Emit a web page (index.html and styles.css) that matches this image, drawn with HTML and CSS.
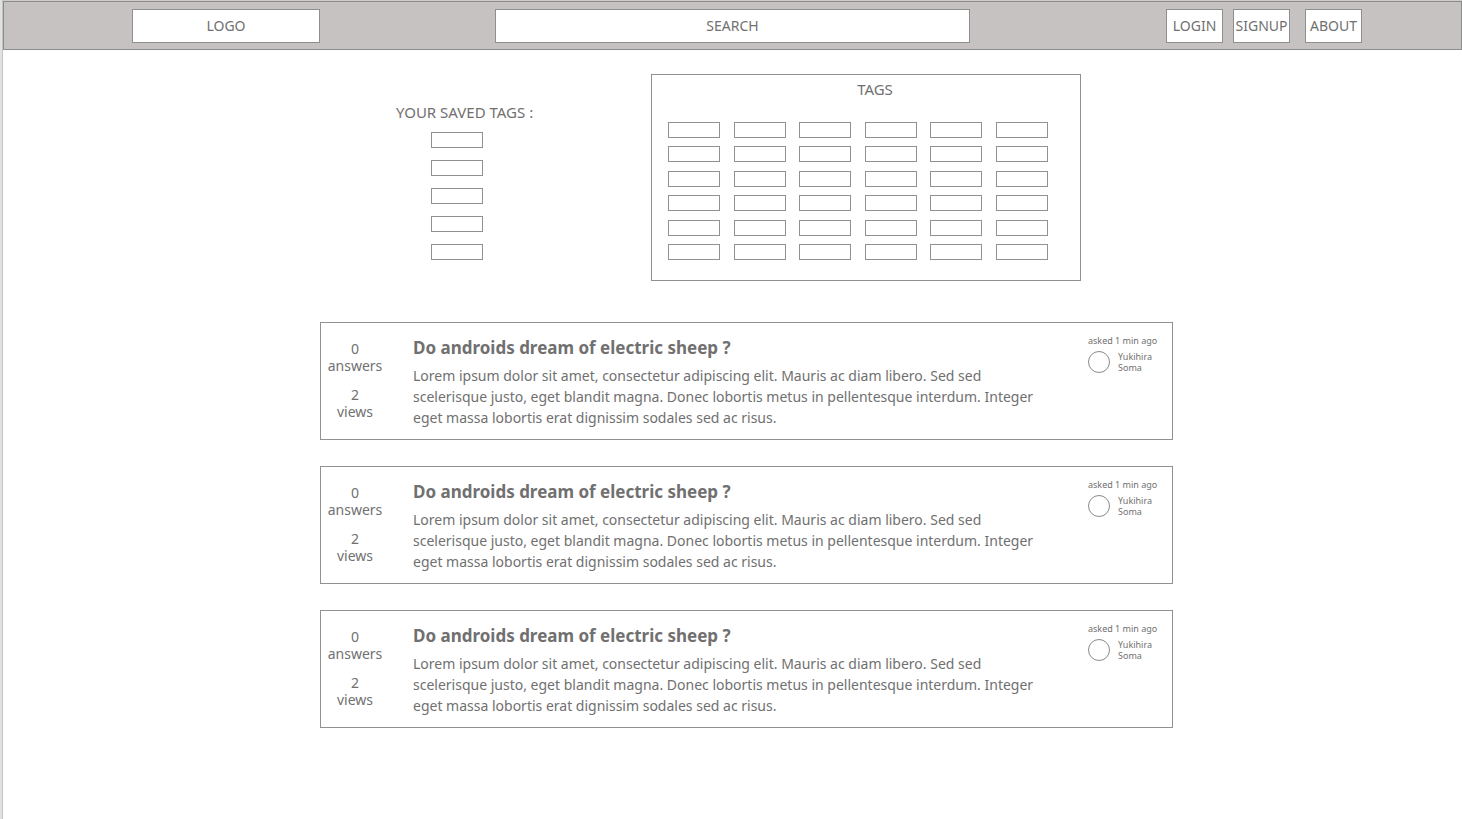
FILE: index.html
```html
<!DOCTYPE html>
<html lang="en">
<head>
<meta charset="utf-8">
<meta name="viewport" content="width=device-width, initial-scale=1">
<title>Questions</title>
<link rel="stylesheet" href="styles.css">
</head>
<body>
<div class="page">
  <header class="topbar">
    <a class="box logo" href="#">LOGO</a>
    <input class="box search" type="text" placeholder="SEARCH" aria-label="Search">
    <nav class="nav">
      <button class="box nav-button" type="button">LOGIN</button>
      <button class="box nav-button" type="button">SIGNUP</button>
      <button class="box nav-button nav-button-last" type="button">ABOUT</button>
    </nav>
  </header>
  <main class="main">
    <div class="tag-area">
      <section class="saved">
        <h2 class="heading">YOUR SAVED TAGS :</h2>
        <ul class="saved-list">
          <li class="tag"></li><li class="tag"></li><li class="tag"></li><li class="tag"></li><li class="tag"></li>
        </ul>
      </section>
      <section class="tags-panel">
        <h2 class="heading tags-title">TAGS</h2>
        <ul class="tag-grid">
          <li class="tag"></li><li class="tag"></li><li class="tag"></li><li class="tag"></li><li class="tag"></li><li class="tag"></li>
          <li class="tag"></li><li class="tag"></li><li class="tag"></li><li class="tag"></li><li class="tag"></li><li class="tag"></li>
          <li class="tag"></li><li class="tag"></li><li class="tag"></li><li class="tag"></li><li class="tag"></li><li class="tag"></li>
          <li class="tag"></li><li class="tag"></li><li class="tag"></li><li class="tag"></li><li class="tag"></li><li class="tag"></li>
          <li class="tag"></li><li class="tag"></li><li class="tag"></li><li class="tag"></li><li class="tag"></li><li class="tag"></li>
          <li class="tag"></li><li class="tag"></li><li class="tag"></li><li class="tag"></li><li class="tag"></li><li class="tag"></li>
        </ul>
      </section>
    </div>
    <div class="questions">
      <article class="question">
        <div class="stats"><p>0<br>answers</p><p>2<br>views</p></div>
        <div class="content">
          <h3 class="title">Do androids dream of electric sheep ?</h3>
          <p class="excerpt">Lorem ipsum dolor sit amet, consectetur adipiscing elit. Mauris ac diam libero. Sed sed scelerisque justo, eget blandit magna. Donec lobortis metus in pellentesque interdum. Integer eget massa lobortis erat dignissim sodales sed ac risus.</p>
        </div>
        <div class="meta">
          <p>asked 1 min ago</p>
          <div class="author"><span class="avatar"></span><span class="name">Yukihira Soma</span></div>
        </div>
      </article>
      <article class="question">
        <div class="stats"><p>0<br>answers</p><p>2<br>views</p></div>
        <div class="content">
          <h3 class="title">Do androids dream of electric sheep ?</h3>
          <p class="excerpt">Lorem ipsum dolor sit amet, consectetur adipiscing elit. Mauris ac diam libero. Sed sed scelerisque justo, eget blandit magna. Donec lobortis metus in pellentesque interdum. Integer eget massa lobortis erat dignissim sodales sed ac risus.</p>
        </div>
        <div class="meta">
          <p>asked 1 min ago</p>
          <div class="author"><span class="avatar"></span><span class="name">Yukihira Soma</span></div>
        </div>
      </article>
      <article class="question">
        <div class="stats"><p>0<br>answers</p><p>2<br>views</p></div>
        <div class="content">
          <h3 class="title">Do androids dream of electric sheep ?</h3>
          <p class="excerpt">Lorem ipsum dolor sit amet, consectetur adipiscing elit. Mauris ac diam libero. Sed sed scelerisque justo, eget blandit magna. Donec lobortis metus in pellentesque interdum. Integer eget massa lobortis erat dignissim sodales sed ac risus.</p>
        </div>
        <div class="meta">
          <p>asked 1 min ago</p>
          <div class="author"><span class="avatar"></span><span class="name">Yukihira Soma</span></div>
        </div>
      </article>
    </div>
  </main>
</div>
</body>
</html>
```
FILE: styles.css
```css
* { box-sizing: border-box; }

body {
  margin: 0;
  background: #e1e1e1;
  color: #707070;
  font-family: "Segoe UI", "Noto Sans", sans-serif;
  font-size: 14px;
  line-height: 17px;
}

h2, h3, p, ul { margin: 0; padding: 0; }
ul { list-style: none; }

.page {
  min-height: 100vh;
  margin-left: 2px;
  border-left: 1px solid #c4c4c4;
  border-top: 1px solid #cfcdcc;
  background: #fff;
}

.topbar {
  display: flex;
  align-items: center;
  height: 49px;
  padding: 0 99px 0 128px;
  border: 1px solid #8c8c8c;
  background: #c6c2c1;
}

.box {
  height: 34px;
  padding: 0;
  border: 1px solid #8f8f8f;
  border-radius: 0;
  background: #fff;
  color: #707070;
  font: inherit;
  text-align: center;
  text-decoration: none;
}

.logo { width: 188px; line-height: 32px; }

.search {
  flex: 1;
  min-width: 0;
  margin: 0 196px 0 175px;
}
.search::placeholder { color: #707070; opacity: 1; }

.nav { display: flex; gap: 10px; }
.nav-button { width: 57px; white-space: nowrap; }
.nav-button-last { margin-left: 5px; }

.main {
  max-width: 881px;
  margin: 0 auto;
  padding: 24px 0 24px 28px;
}

.tag-area {
  display: flex;
  justify-content: space-between;
  padding: 0 92px 0 76px;
}

.heading { font-size: 15px; line-height: 20px; font-weight: 400; }

.saved { padding-top: 28px; }
.saved-list {
  display: flex;
  flex-direction: column;
  gap: 12px;
  padding: 10px 0 0 35px;
}

.tag { width: 52px; height: 16px; border: 1px solid #919191; }

.tags-panel {
  width: 430px;
  padding: 4px 32px 20px 16px;
  border: 1px solid #919191;
}
.tags-title { padding-left: 34px; text-align: center; }
.tag-grid {
  display: grid;
  grid-template-columns: repeat(6, 52px);
  justify-content: space-between;
  align-content: space-between;
  height: 138px;
  margin-top: 23px;
}

.questions {
  display: flex;
  flex-direction: column;
  gap: 26px;
  margin-top: 41px;
}

.question {
  display: flex;
  min-height: 118px;
  border: 1px solid #919191;
}

.stats {
  display: flex;
  flex-direction: column;
  gap: 12px;
  flex: none;
  width: 68px;
  padding-top: 17px;
  text-align: center;
}

.content { flex: 1; padding: 12px 42px 0 24px; }
.title { font-size: 17px; line-height: 26px; font-weight: 700; }
.excerpt { margin-top: 4px; line-height: 21px; }

.meta {
  flex: none;
  width: 84px;
  padding-top: 12px;
  font-size: 9px;
  line-height: 11px;
}
.author { display: flex; align-items: center; gap: 8px; margin-top: 5px; }
.avatar {
  flex: none;
  width: 22px;
  height: 22px;
  border: 1px solid #8a8a8a;
  border-radius: 50%;
}
.name { width: 40px; }
```
